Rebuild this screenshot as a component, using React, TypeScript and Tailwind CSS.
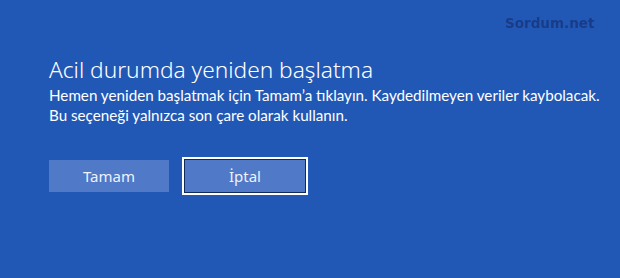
export default function App() {
  return (
    <div className="relative h-[278px] w-[620px] overflow-hidden bg-[#2258b5] font-['Noto_Sans','Open_Sans',sans-serif] text-white">
      {/* watermark */}
      <div className="absolute left-[505px] top-[13px] text-[13.5px] font-bold text-[#183c88] blur-[0.5px] font-['DejaVu_Sans',sans-serif]">
        Sordum.net
      </div>

      <div className="pl-[49px] pt-[56px]">
        <h1 className="text-[22.7px] font-light leading-[28px]">Acil durumda yeniden başlatma</h1>
        <p className="mt-[1px] whitespace-nowrap font-['Lato',sans-serif] text-[15.2px] leading-[20px]">
          Hemen yeniden başlatmak için Tamam’a tıklayın. Kaydedilmeyen veriler kaybolacak.
          <br />
          Bu seçeneği yalnızca son çare olarak kullanın.
        </p>

        <div className="mt-[32px] flex items-center gap-[13px]">
          <button className="h-[32px] w-[120px] bg-[#5079c8] text-[15px] text-[#eef2fb]">Tamam</button>
          <button className="h-[38px] w-[126px] border-2 border-white bg-[#5079c8] text-[15px] text-[#eef2fb] shadow-[inset_0_0_0_1px_#0f2a5c]">
            İptal
          </button>
        </div>
      </div>
    </div>
  );
}
